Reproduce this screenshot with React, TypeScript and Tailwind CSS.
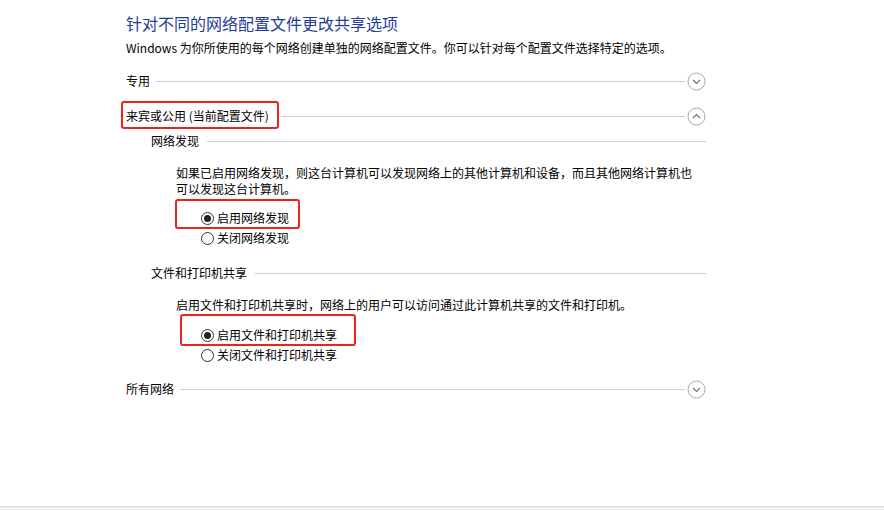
import React from 'react';

const font = { fontFamily: '"Noto Sans CJK SC", "Liberation Sans", sans-serif' };

const CircleChevron = ({ up = false }: { up?: boolean }) => (
  <svg width="19" height="19" viewBox="0 0 19 19" className="shrink-0 ml-[2px]">
    <circle cx="9.5" cy="9.5" r="8.5" fill="white" stroke="#a6a6a6" strokeWidth="1" />
    {up ? (
      <polyline points="6,11 9.5,7.5 13,11" fill="none" stroke="#6f6f6f" strokeWidth="1.1" />
    ) : (
      <polyline points="6,8 9.5,11.5 13,8" fill="none" stroke="#6f6f6f" strokeWidth="1.1" />
    )}
  </svg>
);

const Radio = ({ checked }: { checked?: boolean }) => (
  <span className="relative inline-flex w-[13px] h-[13px] rounded-full border border-[#333333] bg-white items-center justify-center shrink-0">
    {checked && <span className="w-[7px] h-[7px] rounded-full bg-[#222222]" />}
  </span>
);

const SectionRow = ({ label, up, boxed }: { label: string; up?: boolean; boxed?: boolean }) => (
  <div className="flex items-center h-[20px] w-[580px]">
    <span className="relative text-[12px] leading-[20px] text-black whitespace-nowrap">
      {label}
      {boxed && (
        <span className="absolute left-[-5px] right-[-10px] top-[-5px] bottom-[-3px] border-2 border-[#e8241c] rounded-[3px]" />
      )}
    </span>
    <div className={`flex-1 h-px bg-[#cfcfcf] ${boxed ? 'ml-[12px]' : 'ml-[6px]'}`} />
    <CircleChevron up={up} />
  </div>
);

const SubRow = ({ label }: { label: string }) => (
  <div className="flex items-center h-[20px] w-[555px] ml-[25px]">
    <span className="text-[12px] leading-[20px] text-black whitespace-nowrap">{label}</span>
    <div className="flex-1 h-px bg-[#cfcfcf] ml-[8px]" />
  </div>
);

const RadioRow = ({ label, checked, box }: { label: string; checked?: boolean; box?: string }) => (
  <div className="relative flex items-center h-[20px] ml-[75px] w-fit">
    <Radio checked={checked} />
    <span className="ml-[3px] text-[12px] leading-[20px] text-black whitespace-nowrap">{label}</span>
    {box && <span className={`absolute border-2 border-[#e8241c] rounded-[3px] ${box}`} />}
  </div>
);

export default function App() {
  return (
    <div className="w-[884px] h-[510px] bg-white flex flex-col overflow-hidden" style={font}>
      <div className="flex-1 pl-[126px]">
        <div className="mt-[13px] h-[20px] text-[16px] leading-[20px] text-[#1f3c98]">
          针对不同的网络配置文件更改共享选项
        </div>
        <div className="mt-[7px] h-[16px] text-[12px] leading-[16px] text-black whitespace-nowrap">
          Windows 为你所使用的每个网络创建单独的网络配置文件。你可以针对每个配置文件选择特定的选项。
        </div>

        <div className="mt-[15px]">
          <SectionRow label="专用" />
        </div>
        <div className="mt-[15px]">
          <SectionRow label="来宾或公用 (当前配置文件)" up boxed />
        </div>

        <div className="mt-[5px]">
          <SubRow label="网络发现" />
        </div>
        <p className="mt-[14px] ml-[50px] w-[522px] text-[12px] leading-[16px] text-black">
          如果已启用网络发现，则这台计算机可以发现网络上的其他计算机和设备，而且其他网络计算机也可以发现这台计算机。
        </p>
        <div className="mt-[11px]">
          <RadioRow label="启用网络发现" checked box="left-[-26px] right-[-11px] top-[-9px] bottom-[-1px]" />
          <RadioRow label="关闭网络发现" />
        </div>

        <div className="mt-[15px]">
          <SubRow label="文件和打印机共享" />
        </div>
        <p className="mt-[14px] ml-[50px] text-[12px] leading-[16px] text-black whitespace-nowrap">
          启用文件和打印机共享时，网络上的用户可以访问通过此计算机共享的文件和打印机。
        </p>
        <div className="mt-[12px]">
          <RadioRow label="启用文件和打印机共享" checked box="left-[-21px] right-[-19px] top-[-11px] bottom-[-1px]" />
          <RadioRow label="关闭文件和打印机共享" />
        </div>

        <div className="mt-[14px]">
          <SectionRow label="所有网络" />
        </div>
      </div>
      <div className="h-[4px] border-t border-[#dadada] bg-[#f0f0f0]" />
    </div>
  );
}
